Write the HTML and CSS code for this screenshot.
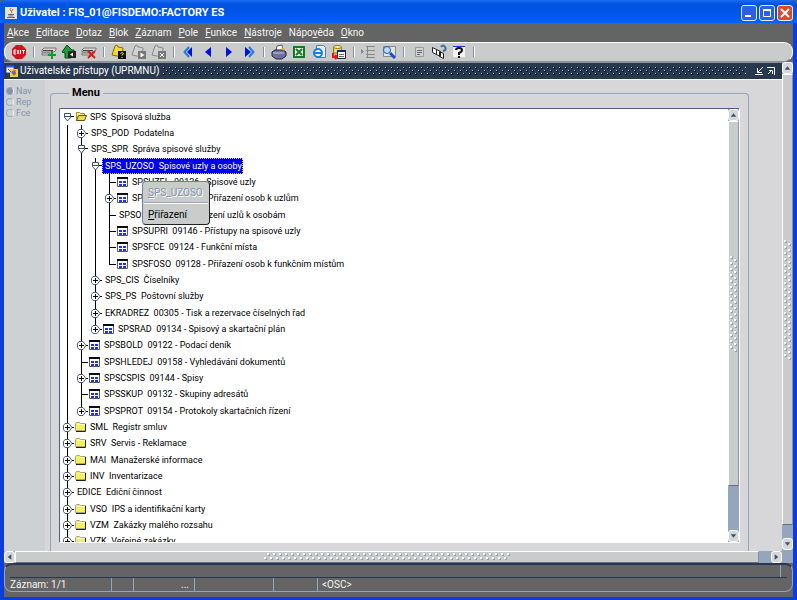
FILE: index.html
```
<!DOCTYPE html>
<html lang="cs">
<head>
    <meta charset="utf-8">
    <title>Uživatel : FIS_01@FISDEMO:FACTORY ES</title>
    <link rel="stylesheet" href="styles.css">
</head>
<body>
    <!-- shared shapes for the tree and the scrollbars -->
    <svg class="defs" aria-hidden="true">
        <symbol id="plus" viewBox="0 0 14 16">
            <path d="M5 4.500h4L12 8.500 9 12.500H5L3.500 10.500v-4z" fill="#fff" stroke="#4c6080"/>
            <path d="M5 8.500h5M7.500 6v5" stroke="#000"/>
            <path d="M12 8.500h2" stroke="#000"/>
        </symbol>
        <symbol id="minus" viewBox="0 0 14 16">
            <path d="M4.500 4.500h6v4l-3 3.500-3-3.500z" fill="#fff" stroke="#3c5070"/>
            <path d="M5 7.500h5" stroke="#3c5070"/>
            <path d="M11 7.500h3" stroke="#000"/>
        </symbol>
        <symbol id="folder" viewBox="0 0 12 16">
            <path d="M.500 4.500l1-1h3l1 1h5v7h-10z" fill="#f7f05a" stroke="#a8a878"/>
            <path d="M1 12.500h9.500V5" fill="none" stroke="#222"/>
            <path d="M2 5.500h8" stroke="#fffdc0"/>
        </symbol>
        <symbol id="open" viewBox="0 0 12 16">
            <path d="M1.500 11.500v-8h3l1 1h4v2" fill="#fff27a" stroke="#9a8a20"/>
            <path d="M1.500 11.500l2-5h8l-2 5z" fill="#f4dc3c" stroke="#5a5010"/>
        </symbol>
        <symbol id="form" viewBox="0 0 12 16">
            <path d="M.5 3.500h10v9h-10z" fill="#fff" stroke="#50586c"/>
            <path d="M0 4h11" stroke="#080818" stroke-width="2"/>
            <path d="M2 8h3M6 8h3M2 11h3M6 11h3" stroke="#2030f0" stroke-width="2"/>
        </symbol>
        <symbol id="up" viewBox="0 0 10 10"><path d="M2 7l3-4 3 4z" fill="#3c5070"/></symbol>
        <symbol id="down" viewBox="0 0 10 10"><path d="M2 3l3 4 3-4z" fill="#3c5070"/></symbol>
        <symbol id="left" viewBox="0 0 10 10"><path d="M7 2l-4 3 4 3z" fill="#3c5070"/></symbol>
        <symbol id="right" viewBox="0 0 10 10"><path d="M3 2l4 3-4 3z" fill="#3c5070"/></symbol>
    </svg>

    <div class="window">
        <header class="titlebar">
            <svg class="java" viewBox="0 0 12 12"><path d="M0 0h12v12H0z" fill="#e8e4da"/><path d="M6 1q-2 2 0 3t0 2.500M8 2q-1 1-1 2" fill="none" stroke="#e05a20"/><path d="M3 7.500h6M3.500 9h5M2 10.500h8" stroke="#4a6a9a"/></svg>
            <h1>Uživatel : FIS_01@FISDEMO:FACTORY ES</h1>
            <button class="win-btn" aria-label="Minimalizovat"><svg viewBox="0 0 14 14"><path d="M3 10h6" stroke="#fff" stroke-width="2"/></svg></button>
            <button class="win-btn" aria-label="Maximalizovat"><svg viewBox="0 0 14 14"><path d="M3.500 4v6.500h7V4" fill="none" stroke="#fff"/><path d="M3 4h8" stroke="#fff" stroke-width="2"/></svg></button>
            <button class="win-btn close" aria-label="Zavřít"><svg viewBox="0 0 14 14"><path d="M3 3l8 8M11 3l-8 8" stroke="#fff" stroke-width="2"/></svg></button>
        </header>

        <nav class="menubar">
            <button><u>A</u>kce</button>
            <button><u>E</u>ditace</button>
            <button><u>D</u>otaz</button>
            <button><u>B</u>lok</button>
            <button><u>Z</u>áznam</button>
            <button><u>P</u>ole</button>
            <button><u>F</u>unkce</button>
            <button><u>N</u>ástroje</button>
            <button>Nápo<u>v</u>ěda</button>
            <button><u>O</u>kno</button>
        </nav>

        <div class="toolbar-wrap">
            <div class="toolbar">
                <button aria-label="Konec"><svg viewBox="0 0 16 16"><path d="M5 1h6l4 4v6l-4 4H5l-4-4V5z" fill="#d8101c"/><path d="M5 6H3v4h2M3 8h2M6 6l2 4M8 6L6 10M9.500 6v4M11 6.500h3M12.500 6v4" fill="none" stroke="#fff"/></svg></button>
                <span class="sep"></span>
                <button aria-label="Vložit záznam"><svg viewBox="0 0 16 16"><path d="M1 6l2-2h12v2l-2 2H1zM1 9h8v2H1z" fill="#d8d8d0" stroke="#777"/><path d="M2 6.500h10" stroke="#444"/><path d="M11 7v8M7 11h8" stroke="#08a020" stroke-width="2"/></svg></button>
                <button aria-label="Uložit"><svg viewBox="0 0 16 16"><path d="M1 8l5-7 5 5h2v3h-3v5H4V9z" fill="#18a038" stroke="#064818"/><path d="M7 7h8v7H7z" fill="#222"/><path d="M12 8.500v4l-3-2z" fill="#fff"/></svg></button>
                <button aria-label="Smazat záznam"><svg viewBox="0 0 16 16"><path d="M1 6l2-2h12v2l-2 2H1zM1 9h8v2H1z" fill="#d8d8d0" stroke="#777"/><path d="M2 6.500h10" stroke="#444"/><path d="M7 7l7 7M14 7l-7 7" stroke="#e01818" stroke-width="2"/></svg></button>
                <span class="sep"></span>
                <button aria-label="Zadat dotaz"><svg viewBox="0 0 16 16"><path d="M1 11l3-9 2-1 1 2 5 1-1 9z" fill="#f4d83c" stroke="#866c10"/><path d="M7 7h8v8H7z" fill="#111"/><path d="M9.500 9.500q1.500-2 3 0l-1.500 2M11 13v1" fill="none" stroke="#fff200"/></svg></button>
                <button aria-label="Provést dotaz" disabled><svg viewBox="0 0 16 16"><path d="M1 11l3-9 2-1 1 2 5 1-1 9z" fill="#d0d0d0" stroke="#888"/><path d="M7 7h8v8H7z" fill="#777"/><path d="M9.500 8.500l4 2.500-4 2.500z" fill="#fff"/></svg></button>
                <button aria-label="Zrušit dotaz" disabled><svg viewBox="0 0 16 16"><path d="M1 11l3-9 2-1 1 2 5 1-1 9z" fill="#d0d0d0" stroke="#888"/><path d="M7 7h8v8H7z" fill="#777"/><path d="M9 9l4 4M13 9l-4 4" stroke="#fff"/></svg></button>
                <span class="sep"></span>
                <button aria-label="První"><svg viewBox="0 0 16 16"><path d="M8 3L3.500 8 8 13" fill="none" stroke="#1880d8" stroke-width="2"/><path d="M11 3v10L6 8z" fill="#0010e0"/></svg></button>
                <button aria-label="Předchozí"><svg viewBox="0 0 16 16"><path d="M10 3v10L4 8z" fill="#0010e0"/></svg></button>
                <button aria-label="Další"><svg viewBox="0 0 16 16"><path d="M5 3v10l6-5z" fill="#0010e0"/></svg></button>
                <button aria-label="Poslední"><svg viewBox="0 0 16 16"><path d="M8 3l4.500 5L8 13" fill="none" stroke="#1880d8" stroke-width="2"/><path d="M4 3v10l6-5z" fill="#0010e0"/></svg></button>
                <span class="sep"></span>
                <button aria-label="Tisk"><svg viewBox="0 0 16 16"><path d="M5 7l1-5 5-1 1 6z" fill="#fff" stroke="#555"/><path d="M1 8l3-2h8l3 2v4l-4 3H5l-4-3z" fill="#70709a" stroke="#222244"/><path d="M2 9h11" stroke="#c8c8e0"/><path d="M11 4l2 2" stroke="#d8b020" stroke-width="2"/></svg></button>
                <button aria-label="Excel"><svg viewBox="0 0 16 16"><path d="M3 3h10v10H3z" fill="#e8f4e4" stroke="#187828" stroke-width="2"/><path d="M5 5l6 6M11 5l-6 6" stroke="#187828" stroke-width="2"/></svg></button>
                <button aria-label="Internet"><svg viewBox="0 0 16 16"><path d="M5.500 1.500h7l2 2v10h-9z" fill="#e8f0fa" stroke="#5878b0"/><circle cx="7" cy="9" r="4" fill="#fff" stroke="#1880d8" stroke-width="2"/><path d="M3 9h8" stroke="#1880d8" stroke-width="2"/></svg></button>
                <button aria-label="Export"><svg viewBox="0 0 16 16"><path d="M2.500 3v6h8V3z" fill="#f4e060" stroke="#86761c"/><ellipse cx="6.500" cy="3" rx="4" ry="1.500" fill="#fff6a0" stroke="#86761c"/><path d="M6.500 6.500h8v8h-8z" fill="#fff" stroke="#223"/><path d="M6 7h9" stroke="#1a2a60" stroke-width="2"/><path d="M8 10.500h5M8 12.500h5" stroke="#666"/><path d="M2 9v4h4M4 11l2 2-2 2" fill="none" stroke="#e01818" stroke-width="2"/></svg></button>
                <span class="sep"></span>
                <button aria-label="Seznam" disabled><svg viewBox="0 0 16 16"><path d="M5 2.500h9M5 6.500h9M5 10.500h9M5 13.500h9M6.500 2v12" stroke="#888"/><path d="M0 5l3 2.500L0 10z" fill="#888"/></svg></button>
                <button aria-label="Hledat"><svg viewBox="0 0 16 16"><path d="M2.500 2.500h12v10h-12z" fill="#e4e4dc" stroke="#888"/><circle cx="6" cy="6" r="3.500" fill="#b8dcff" stroke="#2858b0"/><path d="M9 9l5 5" stroke="#1850c8" stroke-width="3"/></svg></button>
                <span class="sep"></span>
                <button aria-label="Editor" disabled><svg viewBox="0 0 16 16"><path d="M4.500 3.500h8v9h-8z" fill="#d4d4d4" stroke="#999"/><path d="M6 6.500h5M6 8.500h5M6 10.500h3" stroke="#666"/></svg></button>
                <button aria-label="Okna"><svg viewBox="0 0 16 16"><path d="M1.500 3.500l4 2v5l-4-2zM5.500 5.500l4 2v5l-4-2zM8.500 7.500l4 2v5l-4-2z" fill="#fff" stroke="#222"/><path d="M10 3q2-3 4 0t-2 4" fill="none" stroke="#3870a0" stroke-width="2"/></svg></button>
                <button aria-label="Nápověda"><svg viewBox="0 0 16 16"><path d="M2 2h12v11H2z" fill="#f4f4f4"/><path d="M2 2.500h12" stroke="#2030e0"/><path d="M5 6q0-2 3-2t3 2-3 3v2M8 12v2" fill="none" stroke="#111" stroke-width="2"/></svg></button>
                <span class="sep"></span>
            </div>
        </div>

        <div class="desktop">
            <div class="doc">
                <div class="doc-title">
                    <svg class="doc-icon" viewBox="0 0 12 12"><path d="M0 1h8v7H0z" fill="#fff" stroke="#2040c0"/><path d="M0 1.500h8" stroke="#3050ff" stroke-width="2"/><path d="M4 4h8v8H4z" fill="#f0d040"/><path d="M5 7l3-2 2 3-2 3z" fill="#7060e0"/><path d="M2 4l3 3M9 5v5" stroke="#e04020"/></svg>
                    <h2>Uživatelské přístupy (UPRMNU)</h2>
                    <span class="grip"></span>
                    <button aria-label="Zmenšit"><svg viewBox="0 0 10 10"><path d="M9 1L4 6M3.500 2v4.500H8M1 8.500h8" fill="none" stroke="#fff"/></svg></button>
                    <button aria-label="Zvětšit"><svg viewBox="0 0 10 10"><path d="M1 1.500h7.500V9M2 8l4-4M3 4.500h3.500V8" fill="none" stroke="#fff"/></svg></button>
                </div>

                <div class="canvas">
                    <div class="modes">
                        <label><input type="radio" name="mode" checked disabled>Nav</label>
                        <label><input type="radio" name="mode" disabled>Rep</label>
                        <label><input type="radio" name="mode" disabled>Fce</label>
                    </div>

                    <fieldset class="menu-box">
                        <legend>Menu</legend>
                        <div class="tree-box">
                            <ul class="tree">
                                <li><svg><use href="#minus"/></svg><svg class="icon"><use href="#open"/></svg><span>SPS  Spisová služba</span></li>
                                <li><i class="line"></i><svg class="mid"><use href="#plus"/></svg><span>SPS_POD  Podatelna</span></li>
                                <li><i class="line"></i><svg class="mid"><use href="#minus"/></svg><span>SPS_SPR  Správa spisové služby</span></li>
                                <li><i class="line"></i><i class="line"></i><svg class="mid"><use href="#minus"/></svg><span class="selected">SPS_UZOSO  Spisové uzly a osoby</span></li>
                                <li><i class="line"></i><i class="line"></i><i class="line"></i><i class="line tee"></i><svg class="icon"><use href="#form"/></svg><span>SPSUZEL  09136 - Spisové uzly</span></li>
                                <li><i class="line"></i><i class="line"></i><i class="line"></i><svg class="mid"><use href="#plus"/></svg><svg class="icon"><use href="#form"/></svg><span>SPSOSUZ  09138 - Přiřazení osob k uzlům</span></li>
                                <li><i class="line"></i><i class="line"></i><i class="line"></i><i class="line tee"></i><span>SPSOSO  09140 - Přiřazení uzlů k osobám</span></li>
                                <li><i class="line"></i><i class="line"></i><i class="line"></i><i class="line tee"></i><svg class="icon"><use href="#form"/></svg><span>SPSUPRI  09146 - Přístupy na spisové uzly</span></li>
                                <li><i class="line"></i><i class="line"></i><i class="line"></i><i class="line tee"></i><svg class="icon"><use href="#form"/></svg><span>SPSFCE  09124 - Funkční místa</span></li>
                                <li><i class="line"></i><i class="line"></i><i class="line"></i><i class="line tee last"></i><svg class="icon"><use href="#form"/></svg><span>SPSFOSO  09128 - Přiřazení osob k funkčním místům</span></li>
                                <li><i class="line"></i><i class="line"></i><svg class="mid"><use href="#plus"/></svg><span>SPS_CIS  Číselníky</span></li>
                                <li><i class="line"></i><i class="line"></i><svg class="mid"><use href="#plus"/></svg><span>SPS_PS  Poštovní služby</span></li>
                                <li><i class="line"></i><i class="line"></i><svg class="mid"><use href="#plus"/></svg><span>EKRADREZ  00305 - Tisk a rezervace číselných řad</span></li>
                                <li><i class="line"></i><i class="line"></i><svg class="mid last"><use href="#plus"/></svg><svg class="icon"><use href="#form"/></svg><span>SPSRAD  09134 - Spisový a skartační plán</span></li>
                                <li><i class="line"></i><svg class="mid"><use href="#plus"/></svg><svg class="icon"><use href="#form"/></svg><span>SPSBOLD  09122 - Podací deník</span></li>
                                <li><i class="line"></i><i class="line tee"></i><svg class="icon"><use href="#form"/></svg><span>SPSHLEDEJ  09158 - Vyhledávání dokumentů</span></li>
                                <li><i class="line"></i><svg class="mid"><use href="#plus"/></svg><svg class="icon"><use href="#form"/></svg><span>SPSCSPIS  09144 - Spisy</span></li>
                                <li><i class="line"></i><i class="line tee"></i><svg class="icon"><use href="#form"/></svg><span>SPSSKUP  09132 - Skupiny adresátů</span></li>
                                <li><i class="line"></i><svg class="mid last"><use href="#plus"/></svg><svg class="icon"><use href="#form"/></svg><span>SPSPROT  09154 - Protokoly skartačních řízení</span></li>
                                <li><svg class="mid"><use href="#plus"/></svg><svg class="icon"><use href="#folder"/></svg><span>SML  Registr smluv</span></li>
                                <li><svg class="mid"><use href="#plus"/></svg><svg class="icon"><use href="#folder"/></svg><span>SRV  Servis - Reklamace</span></li>
                                <li><svg class="mid"><use href="#plus"/></svg><svg class="icon"><use href="#folder"/></svg><span>MAI  Manažerské informace</span></li>
                                <li><svg class="mid"><use href="#plus"/></svg><svg class="icon"><use href="#folder"/></svg><span>INV  Inventarizace</span></li>
                                <li><svg class="mid"><use href="#plus"/></svg><span>EDICE  Ediční činnost</span></li>
                                <li><svg class="mid"><use href="#plus"/></svg><svg class="icon"><use href="#folder"/></svg><span>VSO  IPS a identifikační karty</span></li>
                                <li><svg class="mid"><use href="#plus"/></svg><svg class="icon"><use href="#folder"/></svg><span>VZM  Zakázky malého rozsahu</span></li>
                                <li><svg class="mid"><use href="#plus"/></svg><svg class="icon"><use href="#folder"/></svg><span>VZK  Veřejné zakázky</span></li>
                            </ul>
                            <div class="scroll tree-scroll">
                                <button aria-label="Nahoru"><svg><use href="#up"/></svg></button>
                                <div class="thumb"><span class="dots"></span></div>
                                <div class="track"></div>
                                <button aria-label="Dolů"><svg><use href="#down"/></svg></button>
                            </div>
                            <div class="popup">
                                <button disabled><u>S</u>PS_UZOSO</button>
                                <hr>
                                <button><u>P</u>řiřazení</button>
                            </div>
                        </div>
                    </fieldset>
                </div>

                <div class="scroll hscroll">
                    <button aria-label="Doleva"><svg><use href="#left"/></svg></button>
                    <div class="thumb"><span class="dots"></span></div>
                    <div class="track"></div>
                    <button aria-label="Doprava"><svg><use href="#right"/></svg></button>
                </div>
            </div>

            <div class="scroll page-scroll">
                <button aria-label="Nahoru"><svg><use href="#up"/></svg></button>
                <div class="thumb"><span class="dots"></span></div>
                <div class="track"></div>
                <button aria-label="Dolů"><svg><use href="#down"/></svg></button>
            </div>
        </div>

        <footer class="status-wrap">
            <div class="status">
                <div class="message"></div>
                <div class="cells">
                    <span class="record">Záznam: 1/1</span>
                    <span class="small"></span>
                    <span class="more">...</span>
                    <span class="wide"></span>
                    <span class="mode"></span>
                    <span class="osc">&lt;OSC&gt;</span>
                </div>
            </div>
        </footer>
    </div>
</body>
</html>
```
FILE: styles.css
```
* {
    box-sizing: border-box;
}
body {
    margin: 0;
    background: #2c6c8c;
    font-family: Roboto, "Liberation Sans", Arial, sans-serif;
    font-size: 10px;
    line-height: 12px;
    color: #000;
}
button {
    margin: 0;
    padding: 0;
    border: none;
    background: none;
    font: inherit;
    color: inherit;
}
svg {
    display: block;
    flex: none;
}
.defs {
    display: none;
}
.window {
    display: flex;
    flex-direction: column;
    height: 100vh;
    padding: 0 4px 3px;
    background: #0a3ce0;
    border-radius: 6px 6px 0 0;
    overflow: hidden;
}

/* title bar */
.titlebar {
    display: flex;
    align-items: center;
    gap: 2px;
    height: 23px;
    margin: 0 -4px;
    padding: 3px 4px 0 5px;
    background: linear-gradient(#1c6cf4, #0052e0 4px, #0058ec 16px, #0062fa);
    flex: none;
}
.java {
    width: 12px;
    height: 12px;
}
.titlebar h1 {
    flex: 1;
    margin: 0 0 0 1px;
    font-size: 11px;
    line-height: 14px;
    font-weight: bold;
    color: #fff;
}
.win-btn {
    width: 16px;
    height: 16px;
    border: 1px solid #e4ecff;
    border-radius: 3px;
    background: #2c60e4;
}
.win-btn.close {
    background: #e0482c;
}

/* menu and tool bars */
.menubar {
    display: flex;
    align-items: center;
    gap: 7px;
    height: 19px;
    padding: 1px 3px 0;
    background: #646464;
    color: #f4f4f4;
    flex: none;
}
.toolbar-wrap {
    background: #646464;
    flex: none;
}
.toolbar {
    display: flex;
    align-items: center;
    gap: 4px;
    height: 20px;
    padding: 0 6px;
    border: 1px solid #fff;
    border-bottom-color: #8c9098;
    border-radius: 9px;
    background: #c9cccb;
}
.toolbar button,
.toolbar svg {
    width: 16px;
    height: 16px;
}
.sep {
    width: 6px;
    height: 10px;
    background: linear-gradient(#7c90b0, #7c90b0) 2px 0 / 1px 100% no-repeat, linear-gradient(#fff, #fff) 3px 0 / 1px 100% no-repeat;
}

/* document window */
.desktop {
    flex: 1;
    display: flex;
    min-height: 0;
    background: #d7d7d9;
}
.doc {
    flex: 1;
    display: flex;
    flex-direction: column;
    min-width: 0;
}
.doc-title {
    display: flex;
    align-items: center;
    gap: 2px;
    height: 17px;
    padding: 0 6px 0 2px;
    background: #28384e;
    border-top: 1px solid #8c9098;
    color: #fff;
    flex: none;
}
.doc-icon {
    width: 12px;
    height: 12px;
}
.doc-title h2 {
    margin: 0;
    font-size: 10px;
    font-weight: normal;
}
.doc-title button,
.doc-title button svg {
    width: 10px;
    height: 10px;
}
.grip {
    flex: 1;
    height: 9px;
    margin: 0 6px 0 2px;
    background-image: conic-gradient(from 270deg at 1px 1px, #b0c0d4 90deg, transparent 0), conic-gradient(from 270deg at 1px 1px, #b0c0d4 90deg, transparent 0), conic-gradient(from 270deg at 2px 2px, #0c1830 90deg, transparent 0), conic-gradient(from 270deg at 2px 2px, #0c1830 90deg, transparent 0);
    background-position: 0 0, 3px 3px, 0 0, 3px 3px;
    background-size: 6px 6px;
}
.canvas {
    flex: 1;
    display: flex;
    gap: 5px;
    min-height: 0;
    padding-right: 33px;
    border-top: 1px solid #fff;
}
.modes {
    width: 41px;
    padding: 5px 2px;
    background: #ced1d3;
}
.modes label {
    display: flex;
    align-items: center;
    gap: 2px;
    height: 11px;
    font-size: 9px;
    color: #8494ac;
}
.modes input {
    appearance: none;
    width: 8px;
    height: 8px;
    margin: 0;
    border: 1px solid #9cabc0;
    border-right-color: #eee;
    border-radius: 50%;
}
.modes input:checked {
    background: #8494ac;
}
.menu-box {
    flex: 1;
    display: flex;
    flex-direction: column;
    min-width: 0;
    min-height: 0;
    margin: 6px 0 0;
    padding: 8px;
    border: 1px solid #94a5bc;
    border-bottom: none;
    border-radius: 4px 4px 0 0;
}
.menu-box legend {
    margin-left: 10px;
    padding: 0 3px;
    font-size: 11px;
    line-height: 14px;
    font-weight: bold;
}
.tree-box {
    position: relative;
    flex: 1;
    display: flex;
    min-height: 0;
    border: 1px solid #fff;
    border-top-color: #4a6080;
    border-left-color: #4a6080;
    border-radius: 2px;
    background: #fff;
}

/* tree */
.tree {
    flex: 1;
    margin: 0;
    padding: 0;
    list-style: none;
    overflow: hidden;
    font-size: 9px;
}
.tree li {
    display: flex;
    height: 16px;
    line-height: 16px;
}
.tree li:nth-child(3n) {
    height: 17px;
}
.tree li > svg {
    width: 14px;
    height: 16px;
}
.tree li > svg.mid {
    background: linear-gradient(#000, #000) 7px 0 / 1px 100% no-repeat;
}
.tree li:nth-child(3n) > svg.mid {
    box-sizing: content-box;
    padding-bottom: 1px;
}
.tree li > svg.last {
    background-size: 1px 8px;
}
.tree li > svg.icon {
    width: 12px;
    margin-left: 1px;
}
.tree span {
    padding: 0 1px 0 3px;
    white-space: pre;
}
.tree .selected {
    background: #0000f0;
    color: #fff;
    outline: 1px dotted #c8c8ff;
    outline-offset: -1px;
}
.line {
    width: 14px;
    background: linear-gradient(#000, #000) 7px 0 / 1px 100% no-repeat;
}
.tee {
    background: linear-gradient(#000, #000) 7px 0 / 1px 100% no-repeat, linear-gradient(#000, #000) 7px 8px / 7px 1px no-repeat;
}
.tee.last {
    background-size: 1px 8px, 7px 1px;
}

/* scrollbars */
.scroll {
    display: flex;
    flex-direction: column;
    flex: none;
    width: 11px;
    background: #94a5bc;
}
.scroll button {
    width: 11px;
    height: 12px;
    border: 1px solid #fff;
    border-radius: 3px;
    background: #d4d6d8;
    flex: none;
}
.scroll svg {
    width: 9px;
    height: 10px;
}
.thumb {
    flex: 1;
    display: flex;
    align-items: center;
    justify-content: center;
    border: 1px solid #fff;
    border-right-color: #8494ac;
    border-bottom-color: #60708c;
    background: #c9cccb;
}
.dots {
    width: 8px;
    height: 96px;
    background-image: radial-gradient(circle at 1px 1px, #fff 1px, transparent 1px), radial-gradient(circle at 5px 4px, #fff 1px, transparent 1px), radial-gradient(circle at 2px 2px, #94a0b0 1px, transparent 1px), radial-gradient(circle at 6px 5px, #94a0b0 1px, transparent 1px);
    background-size: 8px 6px;
}
.tree-scroll .track {
    height: 44px;
}
.page-scroll .track {
    height: 13px;
}
.page-scroll {
    padding-bottom: 13px;
}
.page-scroll .dots {
    height: 120px;
}
.hscroll {
    flex-direction: row;
    width: auto;
    height: 12px;
}
.hscroll .dots {
    width: 246px;
    height: 8px;
    background-image: radial-gradient(circle at 4px 1px, #fff 1px, transparent 1px), radial-gradient(circle at 1px 5px, #fff 1px, transparent 1px), radial-gradient(circle at 5px 2px, #94a0b0 1px, transparent 1px), radial-gradient(circle at 2px 6px, #94a0b0 1px, transparent 1px);
    background-size: 6px 8px;
}
.hscroll .track {
    width: 12px;
}

/* popup menu over the tree */
.popup {
    position: absolute;
    left: 82px;
    top: 72px;
    width: 68px;
    padding: 4px 0 3px;
    border: 1px solid #6c80a0;
    border-right-color: #222;
    border-bottom-color: #222;
    border-radius: 4px;
    background: #c9cccb;
}
.popup button {
    display: block;
    width: 100%;
    padding: 0 5px;
    line-height: 13px;
    text-align: left;
}
.popup button:disabled {
    color: #8494ac;
    text-shadow: 1px 1px #fff;
}
.popup hr {
    height: 2px;
    margin: 3px 1px 4px;
    border: none;
    border-top: 1px solid #94a5bc;
    background: #fff;
}

/* status bar */
.status-wrap {
    flex: none;
    padding-bottom: 5px;
    background: #646464;
}
.status {
    padding: 0 5px;
    border: 1px solid #94a5bc;
    border-top: 2px solid #28384e;
    border-radius: 8px;
    color: #f4f4f4;
}
.message {
    height: 13px;
    border-bottom: 1px solid #28384e;
    background: linear-gradient(#94a5bc, #94a5bc) right 6px top / 1px 100% no-repeat;
}
.cells {
    display: flex;
    height: 13px;
    line-height: 13px;
}
.cells span {
    border-right: 1px solid #94a5bc;
}
.record {
    width: 102px;
}
.small {
    width: 22px;
}
.more {
    width: 61px;
    padding-right: 5px;
    text-align: right;
}
.wide {
    width: 79px;
}
.mode {
    width: 44px;
}
.cells .osc {
    padding-left: 4px;
    border: none;
}
```
